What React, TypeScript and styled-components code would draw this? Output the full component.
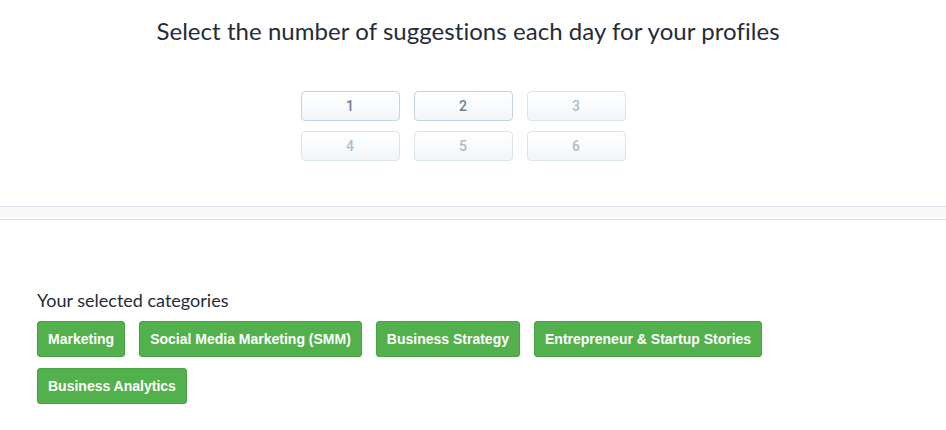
import React, { useState } from "react";
import styled, { createGlobalStyle } from "styled-components";

const GlobalStyle = createGlobalStyle`
  body {
    margin: 0;
    background: #ffffff;
    font-family: Lato, "Open Sans", sans-serif;
  }
`;

const Page = styled.div`
  width: 946px;
`;

const Top = styled.section`
  width: 936px;
  display: flex;
  flex-direction: column;
  align-items: center;
  padding-top: 16px;
  height: 206px;
  box-sizing: border-box;
`;

const Title = styled.h1`
  margin: 0;
  font-family: Lato, sans-serif;
  font-weight: 400;
  font-size: 24px;
  line-height: 30px;
  color: #252b38;
  letter-spacing: 0.05px;
`;

const Grid = styled.div`
  margin-top: 45px;
  margin-right: 10px;
  display: grid;
  grid-template-columns: repeat(3, 99px);
  column-gap: 14px;
  row-gap: 10px;
`;

const Choice = styled.button<{ $active: boolean }>`
  height: 30px;
  border-radius: 4px;
  border: 1px solid ${(p) => (p.$active ? "#c4d4df" : "#dbe5ec")};
  background: linear-gradient(#ffffff, #f2f6f9);
  color: ${(p) => (p.$active ? "#6e7e8e" : "#b3bcc6")};
  font-family: Roboto, sans-serif;
  font-size: 14px;
  font-weight: 500;
  padding: 0;
  cursor: pointer;
`;

const Band = styled.div`
  height: 12px;
  background: #f7f9fb;
  border-top: 1px solid #dbe4ec;
  border-bottom: 1px solid #dbe4ec;
`;

const Bottom = styled.section`
  padding: 69px 37px 0;
`;

const Label = styled.div`
  font-family: Lato, sans-serif;
  font-size: 18px;
  color: #252b38;
  line-height: 22px;
`;

const Chips = styled.div`
  margin-top: 10px;
  display: flex;
  flex-wrap: wrap;
  column-gap: 14px;
  row-gap: 11px;
  width: 760px;
`;

const Chip = styled.span`
  display: inline-flex;
  align-items: center;
  height: 36px;
  box-sizing: border-box;
  padding: 0 10px;
  border-radius: 3px;
  background: #52b14d;
  border: 1px solid #48a344;
  color: #ffffff;
  font-family: "Liberation Sans", Arial, sans-serif;
  font-weight: 700;
  font-size: 14px;
`;

const counts = [1, 2, 3, 4, 5, 6];
const categories = [
  "Marketing",
  "Social Media Marketing (SMM)",
  "Business Strategy",
  "Entrepreneur & Startup Stories",
  "Business Analytics",
];

export default function App() {
  const [selected, setSelected] = useState(2);
  return (
    <Page>
      <GlobalStyle />
      <Top>
        <Title>Select the number of suggestions each day for your profiles</Title>
        <Grid>
          {counts.map((n) => (
            <Choice key={n} $active={n <= selected} onClick={() => setSelected(n)}>
              {n}
            </Choice>
          ))}
        </Grid>
      </Top>
      <Band />
      <Bottom>
        <Label>Your selected categories</Label>
        <Chips>
          {categories.map((c) => (
            <Chip key={c}>{c}</Chip>
          ))}
        </Chips>
      </Bottom>
    </Page>
  );
}
